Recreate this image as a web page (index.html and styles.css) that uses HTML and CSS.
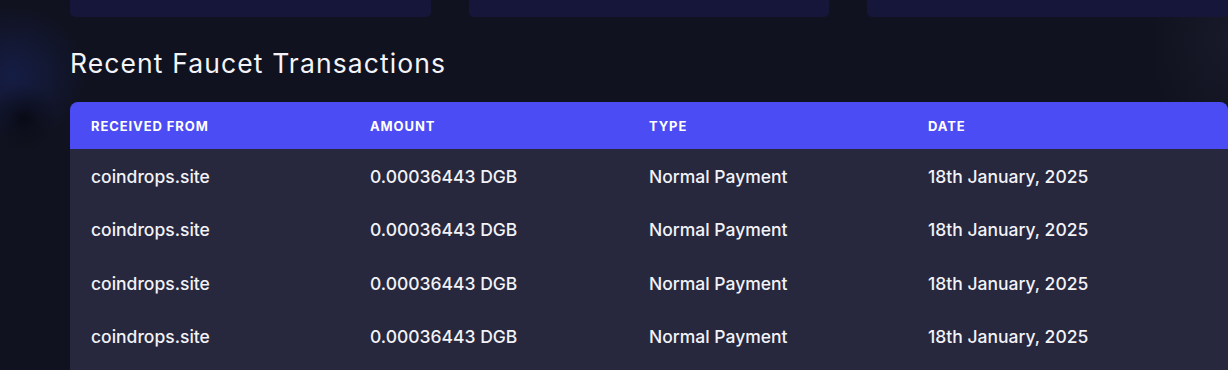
FILE: index.html
```html
<!DOCTYPE html>
<html lang="en">
<head>
<meta charset="utf-8">
<title>Recent Faucet Transactions</title>
<link rel="stylesheet" href="styles.css">
</head>
<body>
<main class="page">
  <div class="cards">
    <div class="card"></div>
    <div class="card"></div>
    <div class="card"></div>
  </div>
  <h2 class="title">Recent Faucet Transactions</h2>
  <div class="table">
    <div class="row head">
      <div class="cell">Received From</div>
      <div class="cell">Amount</div>
      <div class="cell">Type</div>
      <div class="cell">Date</div>
    </div>
    <div class="row">
      <div class="cell">coindrops.site</div>
      <div class="cell">0.00036443 DGB</div>
      <div class="cell">Normal Payment</div>
      <div class="cell">18th January, 2025</div>
    </div>
    <div class="row">
      <div class="cell">coindrops.site</div>
      <div class="cell">0.00036443 DGB</div>
      <div class="cell">Normal Payment</div>
      <div class="cell">18th January, 2025</div>
    </div>
    <div class="row">
      <div class="cell">coindrops.site</div>
      <div class="cell">0.00036443 DGB</div>
      <div class="cell">Normal Payment</div>
      <div class="cell">18th January, 2025</div>
    </div>
    <div class="row">
      <div class="cell">coindrops.site</div>
      <div class="cell">0.00036443 DGB</div>
      <div class="cell">Normal Payment</div>
      <div class="cell">18th January, 2025</div>
    </div>
  </div>
</main>
</body>
</html>
```
FILE: styles.css
```css
html, body {
  margin: 0;
  height: 100%;
}
body {
  background-color: #10121f;
  background-image:
    radial-gradient(circle at 24px 118px, rgba(0,0,0,0.55) 0, rgba(0,0,0,0.25) 14px, rgba(0,0,0,0) 34px),
    radial-gradient(ellipse 75px 70px at 12px 75px, rgba(28,42,115,0.45) 0, rgba(28,42,115,0) 100%),
    radial-gradient(ellipse 80px 110px at 1228px 40px, rgba(40,40,60,0.35) 0, rgba(40,40,60,0) 100%);
  background-repeat: no-repeat;
  font-family: Inter, "Noto Sans", sans-serif;
  color: #f2f2f7;
  overflow: hidden;
}
.page {
  width: 1158px;
  margin-left: 70px;
}
.cards {
  display: grid;
  grid-template-columns: repeat(3, 1fr);
  gap: 38px;
}
.card {
  height: 17px;
  background: #16163a;
  border-radius: 0 0 5px 5px;
}
.title {
  margin: 30px 0 0;
  height: 55px;
  font-size: 26.5px;
  font-weight: 400;
  letter-spacing: 1.1px;
  line-height: 32px;
  color: #f4f4f8;
}
.table {
  border-radius: 8px 8px 0 0;
  overflow: hidden;
  background: #27273d;
  padding-bottom: 20px;
}
.row {
  display: grid;
  grid-template-columns: 279px 279px 279px 1fr;
  height: 53.5px;
  align-items: center;
  font-size: 17.5px;
  font-weight: 500;
  padding-top: 1px;
  box-sizing: border-box;
}
.cell {
  padding-left: 21px;
}
.row.head {
  height: 47px;
  padding-top: 0;
  background: #4b4cf3;
  font-size: 13px;
  font-weight: 700;
  text-transform: uppercase;
  letter-spacing: 0.9px;
  color: #ffffff;
}
```
